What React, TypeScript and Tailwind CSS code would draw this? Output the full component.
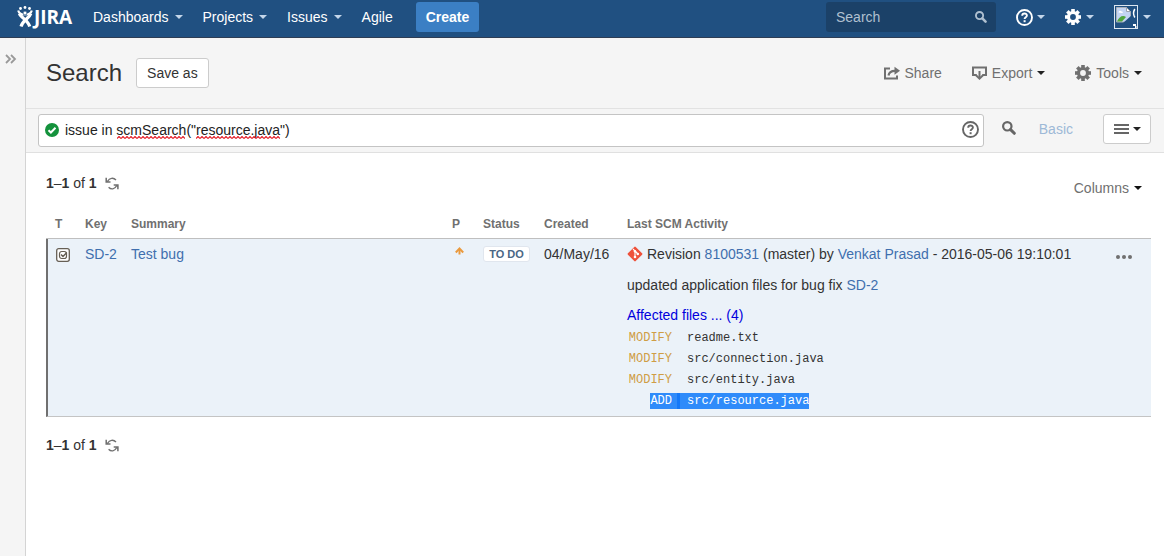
import type { ReactNode } from 'react';

function Caret({ className = '' }: { className?: string }) {
  return (
    <svg viewBox="0 0 8 4" className={`h-1 w-2 shrink-0 fill-current ${className}`} aria-hidden="true">
      <path d="M0 0h8L4 4z" />
    </svg>
  );
}

function GearIcon({ className = '' }: { className?: string }) {
  return (
    <svg viewBox="0 0 16 16" className={`size-4 shrink-0 ${className}`} aria-hidden="true">
      <circle cx="8" cy="8" r="4.500" fill="none" stroke="currentColor" strokeWidth="3.200" />
      {[0, 45, 90, 135, 180, 225, 270, 315].map((angle) => (
        <path key={angle} d="M6.200 3V0h3.600v3z" fill="currentColor" transform={`rotate(${angle} 8 8)`} />
      ))}
    </svg>
  );
}

function HelpIcon({ className = '' }: { className?: string }) {
  return (
    <svg viewBox="0 0 17 17" className={`size-[17px] shrink-0 ${className}`} fill="none" stroke="currentColor" aria-hidden="true">
      <circle cx="8.500" cy="8.500" r="7.500" strokeWidth="1.900" />
      <path d="M6.200 6.800c0-3 4.700-2.900 4.700-.2 0 1.700-2.300 1.600-2.300 3.400" strokeWidth="1.900" />
      <path d="M8.600 11.200v2" strokeWidth="2" />
    </svg>
  );
}

function SearchIcon({ className = '' }: { className?: string }) {
  return (
    <svg viewBox="0 0 14 14" className={`shrink-0 ${className}`} fill="none" stroke="currentColor" aria-hidden="true">
      <circle cx="5.300" cy="5.300" r="4.200" strokeWidth="2.200" />
      <path d="m8.600 8.600 3.700 3.700" strokeWidth="3" strokeLinecap="round" />
    </svg>
  );
}

function RefreshIcon() {
  return (
    <svg viewBox="0 0 14 13" className="h-[13px] w-[14px]" fill="none" stroke="currentColor" aria-hidden="true">
      <path d="M2.600 4.200C4.500.800 8.500.300 11 3M11.600 8.800c-1.700 3.600-5.600 4.100-8 1.500" strokeWidth="1.300" />
      <path d="M1.200.800v4.100h4.300M12.900 12.200V8.100H8.700" strokeWidth="1.500" />
      <path d="M1 2.500v2.600h2.800zM13.100 10.400V7.900h-2.800z" fill="currentColor" stroke="none" />
    </svg>
  );
}

function JiraMark() {
  return (
    <svg viewBox="0 0 17 22" className="h-[22px] w-[17px]" fill="none" stroke="white" aria-hidden="true">
      <g fill="white" stroke="none">
        <circle cx="3.500" cy="2.500" r="1.400" />
        <circle cx="8" cy="1.500" r="1.400" />
        <circle cx="12.500" cy="2.500" r="1.400" />
      </g>
      <path d="M1.200 4.500c.8 3 2.800 4 6.800 4s6-1 6.800-4" strokeWidth="2.200" />
      <path d="M13.800 7.500C12.500 12 6 14 4 20.500" strokeWidth="3.200" />
      <path d="M2.500 7.500c1 4 8.500 6.500 10.200 13" strokeWidth="3.200" />
      <circle cx="8" cy="7" r="2" fill="white" stroke="#205081" strokeWidth=".8" />
    </svg>
  );
}

function BrokenImage() {
  return (
    <svg viewBox="0 0 24 24" className="size-6" aria-hidden="true">
      <rect x=".5" y=".5" width="23" height="23" fill="#205081" stroke="#dce6f0" />
      <path d="M2.500 2.500h10l4 4v10.500h-14z" fill="#c3d4f2" stroke="#a9afb8" />
      <path d="M12.500 2.500v4h4z" fill="white" stroke="#9aa2ad" />
      <path d="M4.500 7.500c0-2 2.500-2.500 3-1 1.500-.5 2 1.500.5 1.500z" fill="white" />
      <path d="M3 16.500c2-5 6-7 9-4.500l-4 4.500z" fill="#4fa63c" />
      <path d="m9 18 9-8v8z" fill="#205081" />
      <path d="M20.800 4c-1.500 2.500-1.500 6 0 8.500" stroke="white" strokeWidth="1.500" fill="none" />
      <path d="M19 20h3M21 22h1.500" stroke="white" strokeWidth="2" />
    </svg>
  );
}

function Squiggle({ className }: { className: string }) {
  return (
    <svg className={`pointer-events-none absolute top-[21px] h-[3px] ${className}`} aria-hidden="true">
      <defs>
        <pattern id="squiggle" width="4" height="3" patternUnits="userSpaceOnUse">
          <path d="M0 2.500 2 .5l2 2" fill="none" stroke="#e5202a" strokeWidth="1.200" />
        </pattern>
      </defs>
      <rect width="100%" height="3" fill="url(#squiggle)" />
    </svg>
  );
}

function NavItem({ children, menu = true }: { children: ReactNode; menu?: boolean }) {
  return (
    <a href="#" className="flex items-center gap-[6px]">
      {children}
      {menu && <Caret className="text-[#c4d6ea]" />}
    </a>
  );
}

function ResultCount() {
  return (
    <div className="flex items-center gap-2">
      <span>
        <strong>1</strong>–<strong>1</strong> of <strong>1</strong>
      </span>
      <button aria-label="Refresh results" className="text-[#707070]">
        <RefreshIcon />
      </button>
    </div>
  );
}

const files = [
  { type: 'MODIFY', path: 'readme.txt' },
  { type: 'MODIFY', path: 'src/connection.java' },
  { type: 'MODIFY', path: 'src/entity.java' },
  { type: 'ADD', path: 'src/resource.java', selected: true },
];

function FileRow({ type, path, selected }: { type: string; path: string; selected?: boolean }) {
  const mark = selected ? 'bg-[#2f8bfa] text-white' : '';
  return (
    <li className="flex h-[21px] items-center leading-4">
      <span className="w-[45px] text-right text-[#cf9d45]">
        <span className={`inline-block ${mark}`}>{type}</span>
      </span>
      <span className={`flex h-4 w-[15px] pl-[5px] ${mark}`}>
        {selected && <span className="w-[3px] bg-[#1478f8]" />}
      </span>
      <span className={mark}>{path}</span>
    </li>
  );
}

function IssueTable() {
  return (
    <table className="mt-[11px] w-full table-fixed border-separate border-spacing-0 text-left">
      <colgroup>
        <col className="w-[34px]" />
        <col className="w-[46px]" />
        <col />
        <col className="w-[31px]" />
        <col className="w-[61px]" />
        <col className="w-[83px]" />
        <col className="w-[479px]" />
        <col className="w-[50px]" />
      </colgroup>
      <thead>
        <tr className="h-[30px] text-xs text-[#707070] [&>th]:border-b [&>th]:border-[#bfbfbf] [&>th]:px-[5px]">
          <th className="pl-[9px]!">T</th>
          <th>Key</th>
          <th>Summary</th>
          <th>P</th>
          <th>Status</th>
          <th>Created</th>
          <th>Last SCM Activity</th>
          <th aria-label="Actions" />
        </tr>
      </thead>
      <tbody>
        <tr className="bg-[#ebf2f9] align-top [&>td]:border-b [&>td]:border-[#c4c4c4] [&>td]:px-[5px] [&>td]:py-[5px]">
          <td className="border-l-2 border-l-[#707070]! pl-[8px]!">
            <svg viewBox="0 0 14 14" className="mt-1 size-[14px]" fill="none" stroke="#665f55" role="img" aria-label="Task">
              <rect x=".7" y=".7" width="12.600" height="12.600" rx="2" fill="white" strokeWidth="1.300" />
              <rect x="3.500" y="3.500" width="7" height="7" rx="2.200" strokeWidth="1.200" />
              <path d="m5 6.500 2 2L10.800 4.500" strokeWidth="1.500" />
            </svg>
          </td>
          <td><a href="#" className="text-[#3f6fae]">SD-2</a></td>
          <td><a href="#" className="text-[#3f6fae]">Test bug</a></td>
          <td>
            <svg viewBox="0 0 9 9" className="mt-[3px] ml-[3px] size-[9px]" fill="none" stroke="#ea9a3e" role="img" aria-label="Medium">
              <path d="M4.500 7.500V2" strokeWidth="2" />
              <path d="M.8 5.500 4.500 1.500l3.700 4" strokeWidth="2" />
            </svg>
          </td>
          <td>
            <span className="mt-[2px] block w-[47px] rounded-[3px] border border-[#e0e6ee] bg-white text-center text-[11px] leading-[14px] font-bold text-[#4a6785]">
              TO DO
            </span>
          </td>
          <td className="whitespace-nowrap">04/May/16</td>
          <td>
            <div className="flex items-center gap-1">
              <svg viewBox="0 0 16 16" className="size-4 shrink-0" role="img" aria-label="Git">
                <rect x="2.500" y="2.500" width="11" height="11" rx="1" fill="#ee513b" transform="rotate(45 8 8)" />
                <path d="m6 3 2 2v6M8 5l3 3" fill="none" stroke="white" strokeWidth="1.100" />
                <circle cx="8" cy="5.200" r="1.200" fill="white" />
                <circle cx="8" cy="11" r="1.300" fill="white" />
                <circle cx="10.800" cy="8" r="1.300" fill="white" />
              </svg>
              <span className="whitespace-nowrap">
                Revision <a href="#" className="text-[#3f6fae]">8100531</a> (master) by{' '}
                <a href="#" className="text-[#3f6fae]">Venkat Prasad</a> - 2016-05-06 19:10:01
              </span>
            </div>
            <p className="mt-[11px]">
              updated application files for bug fix <a href="#" className="text-[#3f6fae]">SD-2</a>
            </p>
            <p className="mt-[10px]">
              <a href="#" className="text-[#0000dd]">Affected files ... (4)</a>
            </p>
            <ul className="mt-[2px] font-['Liberation_Mono',monospace] text-xs">
              {files.map((file) => (
                <FileRow key={file.path} {...file} />
              ))}
            </ul>
          </td>
          <td>
            <button aria-label="Issue actions" className="ml-[10px] flex h-[26px] items-center gap-[2px]">
              <span className="size-1 rounded-full bg-[#707070]" />
              <span className="size-1 rounded-full bg-[#707070]" />
              <span className="size-1 rounded-full bg-[#707070]" />
            </button>
          </td>
        </tr>
      </tbody>
    </table>
  );
}

export default function App() {
  return (
    <div className="flex min-h-screen flex-col bg-white font-['Liberation_Sans',Arial,sans-serif] text-sm leading-5 text-[#333333]">
      <header className="flex h-[38px] items-center border-b border-[#2e3d54] bg-[#205081] pr-[13px] pb-[3px] pl-[17px] text-white">
        <a href="#" aria-label="JIRA home" className="flex w-[76px] items-center">
          <JiraMark />
          <span className="font-['Open_Sans',sans-serif] text-[19px] font-bold">JIRA</span>
        </a>
        <nav className="flex items-center gap-5">
          <NavItem>Dashboards</NavItem>
          <NavItem>Projects</NavItem>
          <NavItem>Issues</NavItem>
          <NavItem menu={false}>Agile</NavItem>
        </nav>
        <button className="ml-[23px] h-[30px] rounded-[3px] bg-[#3b7fc4] px-[10px] font-bold">Create</button>
        <div className="ml-auto flex h-[30px] w-[170px] items-center rounded-[3px] bg-[#1b4168] pr-[9px] pl-[10px]">
          <input
            aria-label="Search issues"
            placeholder="Search"
            className="min-w-0 flex-1 bg-transparent outline-none placeholder:text-[#b0c0d0]"
          />
          <SearchIcon className="size-3 text-[#b0c0d0]" />
        </div>
        <button aria-label="Help" className="ml-5 flex items-center gap-1">
          <HelpIcon />
          <Caret className="text-[#c4d6ea]" />
        </button>
        <button aria-label="Administration" className="ml-5 flex items-center gap-[5px]">
          <GearIcon />
          <Caret className="text-[#c4d6ea]" />
        </button>
        <button aria-label="User profile" className="ml-5 flex items-center gap-[5px]">
          <BrokenImage />
          <Caret className="text-[#c4d6ea]" />
        </button>
      </header>

      <div className="flex flex-1">
        <aside className="w-[26px] shrink-0 border-r border-[#d4d4d4] bg-[#f5f5f5] pt-4 pl-[5px]">
          <button aria-label="Expand sidebar" className="block text-[#999999]">
            <svg viewBox="0 0 12 10" className="h-[10px] w-3" fill="none" stroke="currentColor" strokeWidth="1.800" aria-hidden="true">
              <path d="m1 1 4 4-4 4M6 1l4 4-4 4" />
            </svg>
          </button>
        </aside>

        <main className="min-w-0 flex-1">
          <div className="flex h-[71px] items-center border-b border-[#e2e2e2] bg-[#f5f5f5] pr-[22px] pl-5">
            <h1 className="text-2xl">Search</h1>
            <button className="ml-[14px] h-[30px] rounded-[3px] border border-[#cccccc] bg-white px-[10px]">Save as</button>
            <div className="ml-auto flex items-center gap-[30px] text-[#707070]">
              <button className="flex items-center gap-1">
                <svg viewBox="0 0 16 14" className="h-[14px] w-4" fill="none" stroke="currentColor" aria-hidden="true">
                  <path d="M6 2.500H1V12.500h12V9.500" strokeWidth="2" />
                  <path d="M4.500 9.500C5 6.300 7 4.800 11 4.800" strokeWidth="2.200" />
                  <path d="M10.500.800 16 4.800l-5.500 3.900z" fill="currentColor" stroke="none" />
                </svg>
                Share
              </button>
              <button className="flex items-center gap-[5px]">
                <svg viewBox="0 0 15 14" className="h-[14px] w-[15px]" fill="none" stroke="currentColor" aria-hidden="true">
                  <path d="M4.500 9H1V1.500h13V9h-3.500" strokeWidth="2" />
                  <path d="M7.500 5v7" strokeWidth="2" />
                  <path d="M3.500 8.800 7.500 12.600l4-3.800" strokeWidth="2" />
                </svg>
                Export
                <Caret className="text-[#222222]" />
              </button>
              <button className="flex items-center gap-[5px]">
                <GearIcon />
                Tools
                <Caret className="text-[#222222]" />
              </button>
            </div>
          </div>

          <div className="flex h-11 items-start border-b border-[#e0e0e0] bg-[#f5f5f5] pt-[5px] pr-[13px] pl-3">
            <div className="relative flex h-[33px] flex-1 items-center rounded-[3px] border border-[#c4c4c4] bg-white pr-1 pb-[2px] pl-[6px]">
              <svg viewBox="0 0 14 14" className="size-[14px] shrink-0" aria-hidden="true">
                <circle cx="7" cy="7" r="7" fill="#14923c" />
                <path d="m3.500 7.200 2.400 2.300 4.600-4.700" fill="none" stroke="white" strokeWidth="2" />
              </svg>
              <input
                aria-label="JQL query"
                spellCheck={false}
                defaultValue={'issue in scmSearch("resource.java")'}
                className="min-w-0 flex-1 bg-transparent px-[6px] text-[#222222] outline-none"
              />
              <Squiggle className="left-[78px] w-[68px]" />
              <Squiggle className="left-[157px] w-[84px]" />
              <button aria-label="Syntax help" className="text-[#666666]">
                <HelpIcon />
              </button>
            </div>
            <button aria-label="Run search" className="ml-[18px] flex h-7 items-center text-[#666666]">
              <SearchIcon className="size-[14px]" />
            </button>
            <a href="#" className="ml-[23px] flex h-[30px] items-center text-[#9db9d7]">Basic</a>
            <button
              aria-label="Layout view"
              className="ml-[30px] flex h-[30px] w-12 items-center justify-center gap-1 rounded-[3px] border border-[#cccccc] bg-white text-[#222222]"
            >
              <svg viewBox="0 0 15 10" className="h-[10px] w-[15px] fill-[#666666]" aria-hidden="true">
                <path d="M0 0h15v2H0zM0 4h15v2H0zM0 8h15v2H0z" />
              </svg>
              <Caret />
            </button>
          </div>

          <section className="pt-5 pr-[13px] pl-5">
            <div className="flex items-start justify-between">
              <ResultCount />
              <button className="mt-[5px] mr-[9px] flex items-center gap-[5px] text-[#707070]">
                Columns
                <Caret className="text-[#111111]" />
              </button>
            </div>
            <IssueTable />
            <div className="mt-[18px]">
              <ResultCount />
            </div>
          </section>
        </main>
      </div>
    </div>
  );
}
